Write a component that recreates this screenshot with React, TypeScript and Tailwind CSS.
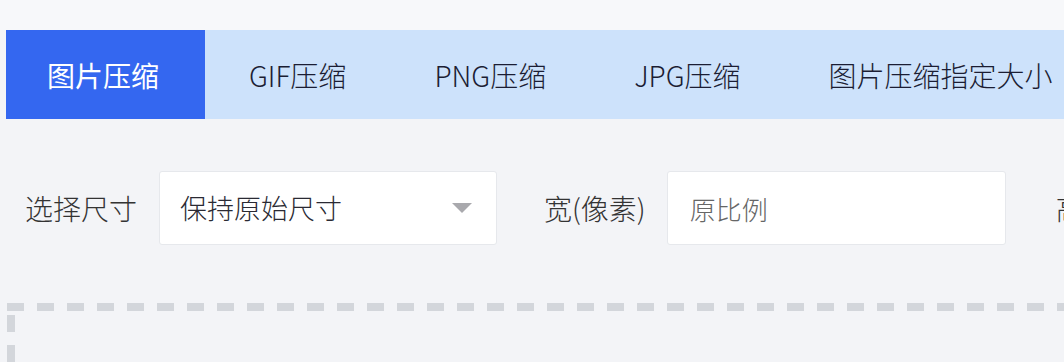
const tabs = ["图片压缩", "GIF压缩", "PNG压缩", "JPG压缩", "图片压缩指定大小"];

const font = "font-['Microsoft_YaHei','Noto_Sans_CJK_SC',sans-serif]";

export default function App() {
  return (
    <div className={`h-[362px] w-[1064px] overflow-hidden bg-[#f3f4f7] font-light ${font}`}>
      <div className="h-[30px] bg-[#f7f8fa]" />

      <nav className="ml-[6px] flex h-[89px] items-stretch bg-[#cde2fb]">
        {tabs.map((t, i) => (
          <div
            key={t}
            className={
              i === 0
                ? "flex shrink-0 items-center bg-[#3467f0] pr-[46px] pl-[41px] text-[28px] font-normal text-white"
                : "flex shrink-0 items-center px-[44px] text-[28px] whitespace-nowrap text-[#1b1d33]"
            }
          >
            {t}
          </div>
        ))}
      </nav>

      <div className="mt-[52px] flex items-center pl-[25px] whitespace-nowrap">
        <span className="shrink-0 text-[28px] text-[#333]">选择尺寸</span>
        <div className="ml-[22px] flex h-[74px] w-[338px] shrink-0 items-center justify-between rounded-[3px] border border-[#e6e8ec] bg-white pr-[24px] pl-[20px]">
          <span className="text-[27px] text-[#2a2a33]">保持原始尺寸</span>
          <svg width="20" height="10" viewBox="0 0 20 10">
            <path d="M0 0h20L10 10z" fill="#a9a9ad" />
          </svg>
        </div>

        <span className="ml-[47px] shrink-0 text-[28px] text-[#333]">宽(像素)</span>
        <div className="ml-[21px] flex h-[74px] w-[339px] shrink-0 items-center rounded-[3px] border border-[#e6e8ec] bg-white pl-[22px]">
          <span className="text-[26px] text-[#666]">原比例</span>
        </div>

        <span className="ml-[50px] shrink-0 text-[28px] text-[#333]">高(像素)</span>
      </div>

      {/* dashed upload area, only its top-left edge is visible */}
      <div className="mt-[58px] ml-[7px]">
        <div className="h-[8px] bg-[repeating-linear-gradient(90deg,#d3d6db_0_17px,transparent_17px_30px)]" />
        <div className="flex">
          <div className="h-[80px] w-[8px] bg-[repeating-linear-gradient(180deg,transparent_0_13px,#d3d6db_13px_30px)] bg-[position:0_-9px]" />
        </div>
      </div>
    </div>
  );
}
